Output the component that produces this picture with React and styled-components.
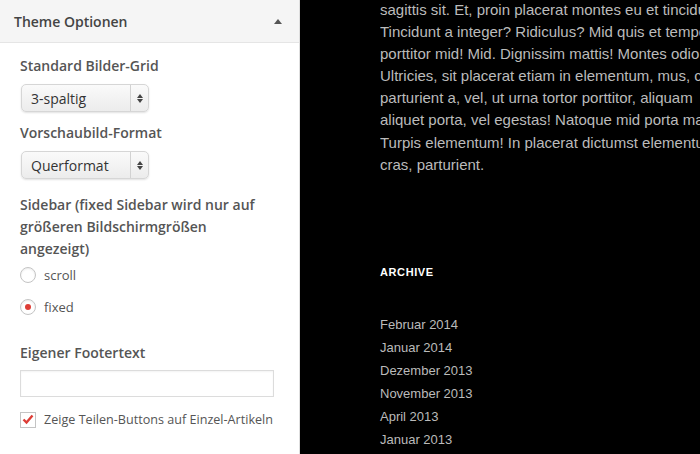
import React from 'react';
import styled, { createGlobalStyle } from 'styled-components';

const GlobalStyle = createGlobalStyle`
  html, body {
    margin: 0;
    padding: 0;
    width: 700px;
    height: 454px;
    overflow: hidden;
    background-color: #000;
  }
`;

const Page = styled.div`
  display: flex;
  flex-direction: row;
  width: 700px;
  height: 454px;
  overflow: hidden;
`;

const Panel = styled.div`
  width: 299px;
  height: 100%;
  flex-shrink: 0;
  background-color: #fff;
  border-right: 1px solid #dedede;
  font-family: 'Open Sans', sans-serif;
  color: #555;
`;

const PanelHeader = styled.div`
  height: 43px;
  box-sizing: border-box;
  display: flex;
  align-items: center;
  justify-content: space-between;
  padding: 0 17px 0 14px;
  background-color: #f5f5f5;
  border-bottom: 1px solid #e5e5e5;
  font-size: 14px;
  font-weight: 600;
  color: #444;
`;

const Arrow = styled.span`
  width: 0;
  height: 0;
  border-left: 4px solid transparent;
  border-right: 4px solid transparent;
  border-bottom: 5px solid #555;
`;

const PanelBody = styled.div`
  display: flex;
  flex-direction: column;
  padding: 12px 25px 0 20px;
`;

const Label = styled.div`
  font-size: 14px;
  font-weight: 600;
  line-height: 22px;
  color: #555;
  margin-top: ${(p) => p.top || 0}px;
`;

const Select = styled.div`
  margin-top: 7px;
  margin-left: 1px;
  width: 128px;
  height: 28px;
  box-sizing: border-box;
  display: flex;
  border: 1px solid #d6d6d6;
  border-radius: 5px;
  background: linear-gradient(#fafafa, #ececec);
  box-shadow: 0 1px 2px rgba(0, 0, 0, 0.12);
  font-size: 14px;
  color: #333;
`;

const SelectText = styled.span`
  flex: 1;
  display: flex;
  align-items: center;
  padding-left: 9px;
`;

const SelectArrows = styled.span`
  width: 17px;
  border-left: 1px solid #d2d2d2;
  display: flex;
  flex-direction: column;
  align-items: center;
  justify-content: center;
  gap: 1px;
`;

const Tri = styled.span`
  width: 0;
  height: 0;
  border-left: 3px solid transparent;
  border-right: 3px solid transparent;
  ${(p) => (p.down ? 'border-top: 4px solid #444;' : 'border-bottom: 4px solid #444;')}
`;

const RadioRow = styled.div`
  display: flex;
  align-items: center;
  gap: 8px;
  height: 20px;
  margin-top: ${(p) => p.top}px;
  font-size: 13px;
  color: #555;
`;

const RadioCircle = styled.span`
  width: 16px;
  height: 16px;
  box-sizing: border-box;
  border: 1px solid #c4c4c4;
  border-radius: 50%;
  background: #fff;
  box-shadow: inset 0 1px 2px rgba(0, 0, 0, 0.08);
  display: flex;
  align-items: center;
  justify-content: center;

  &::after {
    content: '';
    display: ${(p) => (p.checked ? 'block' : 'none')};
    width: 6px;
    height: 6px;
    border-radius: 50%;
    background: #dd3d36;
  }
`;

const TextInput = styled.div`
  margin-top: 6px;
  width: 254px;
  height: 27px;
  box-sizing: border-box;
  border: 1px solid #dcdcdc;
  background: #fff;
  box-shadow: inset 0 1px 2px rgba(0, 0, 0, 0.05);
`;

const CheckRow = styled.div`
  display: flex;
  align-items: center;
  gap: 8px;
  margin-top: 14px;
  font-size: 12.6px;
  color: #555;
  white-space: nowrap;
`;

const CheckBox = styled.span`
  width: 16px;
  height: 16px;
  box-sizing: border-box;
  border: 1px solid #c4c4c4;
  background: #fff;
  display: flex;
  align-items: center;
  justify-content: center;
`;

const Content = styled.div`
  flex: 1;
  min-width: 0;
  padding-left: 80px;
  font-family: 'Liberation Sans', Arial, sans-serif;
  color: #bbb;
  overflow: hidden;
`;

const Body = styled.div`
  margin-top: -1px;
  width: 320px;
  overflow: hidden;
  font-size: 15px;
  line-height: 22.1px;
  white-space: nowrap;
`;

const WidgetTitle = styled.h3`
  margin: 86px 0 0;
  font-size: 11px;
  font-weight: bold;
  letter-spacing: 0.6px;
  color: #fff;
  line-height: 20px;
`;

const ArchiveList = styled.ul`
  list-style: none;
  margin: 31px 0 0;
  padding: 0;
`;

const ArchiveItem = styled.li`
  font-size: 13px;
  line-height: 23px;
  color: #bbb;
`;

const bodyLines = [
  'sagittis sit. Et, proin placerat montes eu et tincidunt',
  'Tincidunt a integer? Ridiculus? Mid quis et tempor',
  'porttitor mid! Mid. Dignissim mattis! Montes odio',
  'Ultricies, sit placerat etiam in elementum, mus, cras',
  'parturient a, vel, ut urna tortor porttitor, aliquam',
  'aliquet porta, vel egestas! Natoque mid porta magna',
  'Turpis elementum! In placerat dictumst elementum',
  'cras, parturient.',
];

const archive = [
  'Februar 2014',
  'Januar 2014',
  'Dezember 2013',
  'November 2013',
  'April 2013',
  'Januar 2013',
];

const SelectBox = ({ value }) => (
  <Select>
    <SelectText>{value}</SelectText>
    <SelectArrows>
      <Tri />
      <Tri down />
    </SelectArrows>
  </Select>
);

const App = () => {
  return (
    <Page>
      <GlobalStyle />
      <Panel>
        <PanelHeader>
          Theme Optionen
          <Arrow />
        </PanelHeader>
        <PanelBody>
          <Label>Standard Bilder-Grid</Label>
          <SelectBox value="3-spaltig" />
          <Label top={10}>Vorschaubild-Format</Label>
          <SelectBox value="Querformat" />
          <Label top={15}>
            Sidebar (fixed Sidebar wird nur auf größeren Bildschirmgrößen angezeigt)
          </Label>
          <RadioRow top={5}>
            <RadioCircle />
            scroll
          </RadioRow>
          <RadioRow top={12}>
            <RadioCircle checked />
            fixed
          </RadioRow>
          <Label top={25}>Eigener Footertext</Label>
          <TextInput />
          <CheckRow>
            <CheckBox>
              <svg width="12" height="11" viewBox="0 0 12 11">
                <path d="M1.5 5.5 L4.5 8.5 L10.5 1.5" fill="none" stroke="#dd3d36" strokeWidth="2.4" />
              </svg>
            </CheckBox>
            Zeige Teilen-Buttons auf Einzel-Artikeln
          </CheckRow>
        </PanelBody>
      </Panel>
      <Content>
        <Body>
          {bodyLines.map((line) => (
            <React.Fragment key={line}>
              {line}
              <br />
            </React.Fragment>
          ))}
        </Body>
        <WidgetTitle>ARCHIVE</WidgetTitle>
        <ArchiveList>
          {archive.map((a) => (
            <ArchiveItem key={a}>{a}</ArchiveItem>
          ))}
        </ArchiveList>
      </Content>
    </Page>
  );
};

export default App;
